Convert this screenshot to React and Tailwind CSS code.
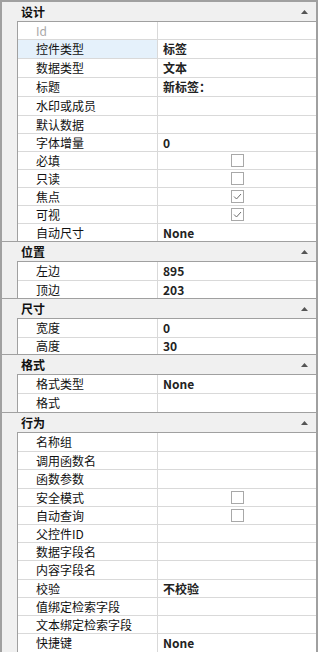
import React from 'react';

const sections = [
  {
    title: '设计',
    rows: [
      { label: 'Id', h: 'h-[18px]', disabled: true },
      { label: '控件类型', value: '标签', h: 'h-[19px]', selected: true },
      { label: '数据类型', value: '文本', h: 'h-[19px]' },
      { label: '标题', value: '新标签：', h: 'h-[19px]' },
      { label: '水印或成员', h: 'h-[19px]' },
      { label: '默认数据', h: 'h-[18px]' },
      { label: '字体增量', value: '0', h: 'h-[18px]' },
      { label: '必填', check: false, h: 'h-[18px]' },
      { label: '只读', check: false, h: 'h-[18px]' },
      { label: '焦点', check: true, h: 'h-[18px]' },
      { label: '可视', check: true, h: 'h-[18px]' },
      { label: '自动尺寸', value: 'None', h: 'h-[17px]' },
    ],
  },
  {
    title: '位置',
    rows: [
      { label: '左边', value: '895', h: 'h-[19px]' },
      { label: '顶边', value: '203', h: 'h-[17px]' },
    ],
  },
  {
    title: '尺寸',
    rows: [
      { label: '宽度', value: '0', h: 'h-[19px]' },
      { label: '高度', value: '30', h: 'h-[16px]' },
    ],
  },
  {
    title: '格式',
    rows: [
      { label: '格式类型', value: 'None', h: 'h-[19px]' },
      { label: '格式', h: 'h-[18px]' },
    ],
  },
  {
    title: '行为',
    last: true,
    rows: [
      { label: '名称组', h: 'h-[19px]' },
      { label: '调用函数名', h: 'h-[18px]' },
      { label: '函数参数', h: 'h-[19px]' },
      { label: '安全模式', check: false, h: 'h-[18px]' },
      { label: '自动查询', check: false, h: 'h-[18px]' },
      { label: '父控件ID', h: 'h-[18px]' },
      { label: '数据字段名', h: 'h-[18px]' },
      { label: '内容字段名', h: 'h-[19px]' },
      { label: '校验', value: '不校验', h: 'h-[18px]' },
      { label: '值绑定检索字段', h: 'h-[18px]' },
      { label: '文本绑定检索字段', h: 'h-[18px]' },
      { label: '快捷键', value: 'None', h: 'h-[18px]' },
    ],
  },
];

function CheckBox({ checked }) {
  return (
    <div className="w-[13px] h-[13px] border border-[#a8a8a8] bg-white flex items-center justify-center">
      {checked && (
        <svg width="9" height="7" viewBox="0 0 9 7">
          <polyline points="1,3.5 3.5,6 8,1" fill="none" stroke="#6e6e6e" strokeWidth="1" />
        </svg>
      )}
    </div>
  );
}

function Row({ row }) {
  return (
    <div className={`flex ${row.h} border-b border-[#d9d9d9] last:border-b-0`}>
      <div
        className={`w-[140px] shrink-0 flex items-center pl-[18px] border-r border-[#d9d9d9] ${
          row.selected ? 'bg-[#e5f1fb]' : 'bg-white'
        } ${row.disabled ? 'text-[#a8a8a8]' : 'text-[#111]'}`}
      >
        {row.label}
      </div>
      <div className="flex-1 flex items-center pl-[5px] font-bold text-[#222]">
        {row.check !== undefined ? (
          <div className="flex-1 flex justify-center pr-[5px]">
            <CheckBox checked={row.check} />
          </div>
        ) : (
          row.value
        )}
      </div>
    </div>
  );
}

export default function App() {
  return (
    <div
      className="w-[318px] h-[652px] overflow-hidden bg-[#f0f0f0] border-t-2 border-x-2 border-[#a0a0a0] text-[12px] leading-none"
      style={{ fontFamily: '"Noto Sans CJK SC", "Liberation Sans", sans-serif' }}
    >
      {sections.map((s) => (
        <div key={s.title} className={s.last ? '' : 'border-b border-[#a0a0a0]'}>
          <div className="h-[19px] flex items-center justify-between pl-[19px] pr-[8px] font-bold text-[#111]">
            <span>{s.title}</span>
            <svg width="7" height="4" viewBox="0 0 7 4">
              <polygon points="0,4 7,4 3.5,0" fill="#555" />
            </svg>
          </div>
          <div className="ml-[15px] border-l border-t border-[#a0a0a0] bg-white">
            {s.rows.map((r) => (
              <Row key={r.label} row={r} />
            ))}
          </div>
        </div>
      ))}
    </div>
  );
}
